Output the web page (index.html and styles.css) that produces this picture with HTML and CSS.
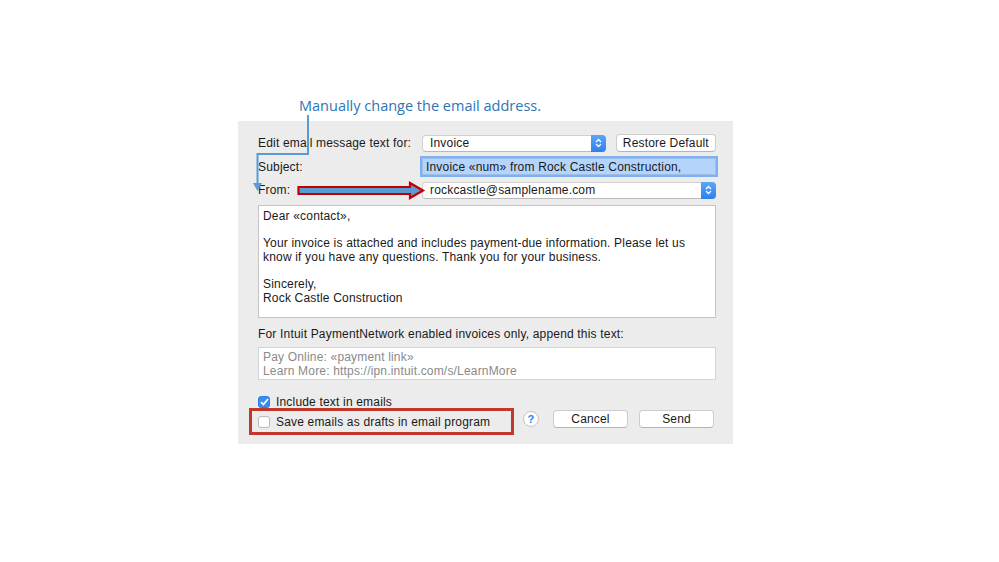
FILE: index.html
```html
<!DOCTYPE html>
<html lang="en">
<head>
    <meta charset="UTF-8">
    <title>Email Template</title>
    <link rel="stylesheet" href="styles.css">
</head>
<body>
    <div class="stage">
        <div class="note">Manually change the email address.</div>

        <div class="panel">
            <div class="row">
                <label class="row-label">Edit email message text for:</label>
                <div class="popup popup-short">
                    <span>Invoice</span>
                    <span class="stepper">
                        <svg width="7" height="10" viewBox="0 0 7 10"><path d="M1 4 L3.5 1.5 L6 4 M1 6 L3.5 8.5 L6 6" fill="none" stroke="#fff" stroke-width="1.3"/></svg>
                    </span>
                </div>
                <button class="btn btn-restore">Restore Default</button>
            </div>

            <div class="row">
                <label class="row-label">Subject:</label>
                <div class="field field-focus">Invoice &laquo;num&raquo; from Rock Castle Construction,</div>
            </div>

            <div class="row">
                <label class="row-label">From:</label>
                <div class="popup popup-wide">
                    <span>rockcastle@samplename.com</span>
                    <span class="stepper">
                        <svg width="7" height="10" viewBox="0 0 7 10"><path d="M1 4 L3.5 1.5 L6 4 M1 6 L3.5 8.5 L6 6" fill="none" stroke="#fff" stroke-width="1.3"/></svg>
                    </span>
                </div>
            </div>

            <div class="message">
                <p>Dear &laquo;contact&raquo;,</p>
                <p>Your invoice is attached and includes payment-due information. Please let us<br>know if you have any questions. Thank you for your business.</p>
                <p>Sincerely,<br>Rock Castle Construction</p>
            </div>

            <div class="append-label">For Intuit PaymentNetwork enabled invoices only, append this text:</div>
            <div class="append-box">Pay Online: &laquo;payment link&raquo;<br>Learn More: https://ipn.intuit.com/s/LearnMore</div>

            <div class="check-row">
                <span class="check check-on">
                    <svg width="9" height="8" viewBox="0 0 9 8"><path d="M1 4.2 L3.4 6.5 L8 1" fill="none" stroke="#fff" stroke-width="1.7"/></svg>
                </span>
                <span>Include text in emails</span>
            </div>

            <div class="bottom-row">
                <div class="check-row">
                    <span class="check"></span>
                    <span>Save emails as drafts in email program</span>
                </div>
                <span class="help">?</span>
                <button class="btn btn-action">Cancel</button>
                <button class="btn btn-action">Send</button>
            </div>

            <div class="red-box"></div>
        </div>

        <svg class="arrows" width="999" height="562" viewBox="0 0 999 562">
            <!-- blue callout line -->
            <path d="M308 115 V154 H257.5 V184" fill="none" stroke="#5b9bd5" stroke-width="2"/>
            <path d="M253 183 L257.5 191 L262 183 Z" fill="#5b9bd5"/>
            <!-- red block arrow -->
            <path d="M298.5 187 H410 V183 L423 190.5 L410 198 V194 H298.5 Z" fill="#5b9bd5" stroke="#c00000" stroke-width="2.2" stroke-linejoin="miter"/>
        </svg>
    </div>
</body>
</html>
```

FILE: styles.css
```css
body {
    margin: 0;
    background-color: white;
    font-family: "Liberation Sans", Arial, sans-serif;
    font-size: 12px;
    letter-spacing: 0.18px;
    color: #1a1a1a;
}

.stage {
    position: relative;
    width: 999px;
    height: 562px;
    padding-top: 95px;
    box-sizing: border-box;
}

.note {
    margin-left: 299px;
    height: 26px;
    font-family: "Open Sans", "Noto Sans", sans-serif;
    font-size: 14.5px;
    letter-spacing: 0;
    color: #2e75b6;
    line-height: 22px;
}

.panel {
    position: relative;
    margin-left: 238px;
    width: 495px;
    height: 323px;
    box-sizing: border-box;
    background-color: #ececec;
    padding: 13px 17px 0 20px;
}

.row {
    display: flex;
    align-items: center;
    height: 18px;
    margin-bottom: 5.5px;
}

.row-label {
    width: 161px;
    flex-shrink: 0;
}

.popup {
    display: flex;
    align-items: center;
    justify-content: space-between;
    height: 17px;
    box-sizing: border-box;
    background-color: white;
    border: 1px solid #cfcfcf;
    border-bottom-color: #b9b9b9;
    border-radius: 4px;
    padding-left: 7px;
    margin-left: 3px;
}

.popup-short {
    width: 185px;
}

.popup-wide {
    width: 295px;
}

.stepper {
    display: flex;
    align-items: center;
    justify-content: center;
    width: 15px;
    height: 17px;
    margin-right: -1px;
    border-radius: 0 4px 4px 0;
    background: linear-gradient(#5aa6f8, #2e80ef);
}

.btn {
    font-family: "Liberation Sans", Arial, sans-serif;
    font-size: 12px;
    letter-spacing: 0.18px;
    color: #1a1a1a;
    height: 18px;
    padding: 0;
    background-color: white;
    border: 1px solid #cdcdcd;
    border-bottom-color: #b4b4b4;
    border-radius: 4px;
}

.btn-restore {
    width: 101px;
    margin-left: 10px;
}

.field {
    width: 294px;
    height: 17px;
    box-sizing: border-box;
    margin-left: 3px;
    padding-left: 3px;
    line-height: 16px;
    border: 1px solid #9cbfe9;
}

.field-focus {
    background-color: #b5d4fb;
    box-shadow: 0 0 0 2px #7fb0ef;
}

.message {
    margin-top: 3px;
    height: 113px;
    box-sizing: border-box;
    background-color: white;
    border: 1px solid #c4c4c4;
    padding: 3px 4px;
    line-height: 14px;
}

.message p {
    margin: 0 0 13px 0;
}

.append-label {
    margin-top: 9px;
    height: 20px;
    line-height: 14px;
}

.append-box {
    height: 33px;
    box-sizing: border-box;
    background-color: white;
    border: 1px solid #d4d4d4;
    padding: 2px 4px;
    line-height: 14px;
    color: #8a8a8a;
}

.check-row {
    display: flex;
    align-items: center;
    gap: 6px;
    height: 19px;
}

.append-box + .check-row {
    margin-top: 13px;
}

.check {
    display: flex;
    align-items: center;
    justify-content: center;
    width: 12px;
    height: 12px;
    box-sizing: border-box;
    background-color: white;
    border: 1px solid #b8b8b8;
    border-radius: 3px;
}

.check-on {
    background-color: #3a8cf3;
    border-color: #2f7fe6;
}

.bottom-row {
    display: flex;
    align-items: flex-start;
    margin-top: -3px;
}

.bottom-row .check-row {
    width: 265px;
    margin-top: 3.5px;
}

.help {
    display: flex;
    align-items: center;
    justify-content: center;
    width: 16px;
    height: 16px;
    margin-top: 2px;
    box-sizing: border-box;
    background-color: white;
    border: 1px solid #c4c4c4;
    border-radius: 50%;
    color: #2f82f0;
    font-weight: bold;
    font-size: 11px;
}

.btn-action {
    width: 75px;
    margin-top: 1px;
    margin-left: 11px;
}

.help + .btn-action {
    margin-left: 14px;
}

.red-box {
    position: absolute;
    left: 11px;
    top: 287px;
    width: 265px;
    height: 27px;
    box-sizing: border-box;
    border: 3px solid #c0392b;
}

.arrows {
    position: absolute;
    left: 0;
    top: 0;
    pointer-events: none;
}
```
